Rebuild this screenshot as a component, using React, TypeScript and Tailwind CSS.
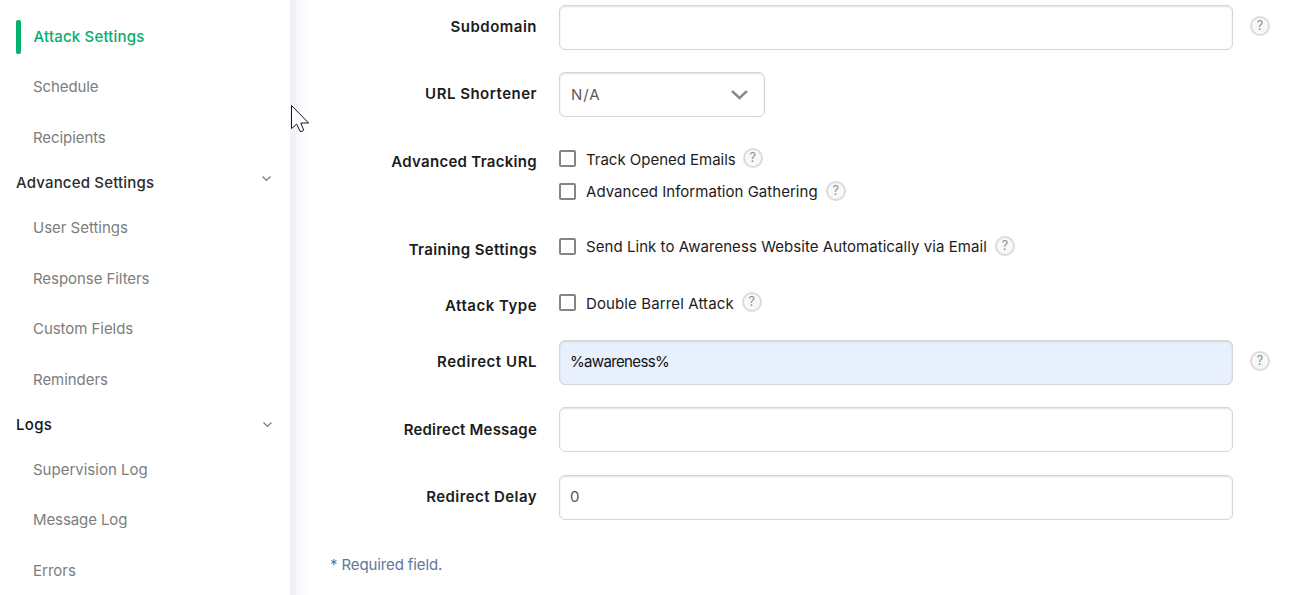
import type { ReactNode } from 'react';

type NavEntry = { text: string; kind: 'item' | 'header' | 'active'; tracking?: string; className?: string; chevron?: string };

const NAV: NavEntry[] = [
  { text: 'Attack Settings', kind: 'active', tracking: 'tracking-[0.18px]' },
  { text: 'Schedule', kind: 'item', tracking: 'tracking-[-0.1px]' },
  { text: 'Recipients', kind: 'item', tracking: 'tracking-[-0.08px]' },
  { text: 'Advanced Settings', kind: 'header', tracking: 'tracking-[0.18px]', className: 'h-10 text-[#2b2b2b]', chevron: 'mb-[9px] mr-px' },
  { text: 'User Settings', kind: 'item', tracking: 'tracking-[-0.02px]' },
  { text: 'Response Filters', kind: 'item', tracking: 'tracking-[-0.06px]' },
  { text: 'Custom Fields', kind: 'item', tracking: 'tracking-[-0.05px]' },
  { text: 'Reminders', kind: 'item', tracking: 'tracking-[-0.05px]' },
  { text: 'Logs', kind: 'header', tracking: 'tracking-[0.3px]', className: 'h-[39.5px] text-[#151515]', chevron: '' },
  { text: 'Supervision Log', kind: 'item' },
  { text: 'Message Log', kind: 'item', tracking: 'tracking-[-0.1px]' },
  { text: 'Errors', kind: 'item' },
];

function NavRow({ entry }: { entry: NavEntry }) {
  const tracking = entry.tracking ?? '';
  if (entry.kind === 'header') {
    return (
      <div className={`flex shrink-0 items-center justify-between pl-4 pr-[18px] ${entry.className}`}>
        <span className={`font-medium ${tracking}`}>{entry.text}</span>
        <svg className={`h-[5px] w-[9px] ${entry.chevron}`} viewBox="0 0 9 5" fill="none" stroke="#777" strokeWidth="1.2">
          <path d="M.5 .5 4.5 4.4 8.5 .5" />
        </svg>
      </div>
    );
  }
  if (entry.kind === 'active') {
    return (
      <div className="flex h-[50.5px] shrink-0 items-center pl-4">
        <span className="h-[34px] w-[5px] rounded-[2px] bg-[#06b16b]" />
        <span className={`ml-[12.6px] font-medium text-[#06ad68] ${tracking}`}>{entry.text}</span>
      </div>
    );
  }
  return (
    <div className="flex h-[50.5px] shrink-0 items-center pl-[33px]">
      <span className={`text-[#7d7d7d] ${tracking}`}>{entry.text}</span>
    </div>
  );
}

function Help({ className = '' }: { className?: string }) {
  return (
    <span className={`flex h-5 w-5 shrink-0 items-center justify-center rounded-full border-2 border-[#dcdcdc] bg-[#f8f8f8] pt-px text-[12.5px] leading-none text-[#8c8c8c] ${className}`}>
      ?
    </span>
  );
}

function Row({ label, tracking, height, children }: { label: string; tracking: string; height: string; children: ReactNode }) {
  return (
    <div className={`flex shrink-0 items-start ${height}`}>
      <div className={`flex h-[43px] w-[227px] shrink-0 items-center justify-end font-semibold text-[#1c1c1c] ${tracking}`}>{label}</div>
      <div className="ml-[22px] flex flex-col">{children}</div>
    </div>
  );
}

function Field({ value = '', className = 'bg-white', help = false }: { value?: string; className?: string; help?: boolean }) {
  return (
    <div className="flex items-center">
      <div className={`flex h-[45px] w-[674px] items-center rounded-md border border-[#d5d5d5] px-[10px] pb-[2px] shadow-[inset_0_1px_2px_rgba(0,0,0,0.12)] ${className}`}>
        {value}
      </div>
      {help && <Help className="mb-[3px] ml-[17px]" />}
    </div>
  );
}

function Check({ text, tracking = '', helpClass, textClass = '', boxClass = '' }: { text: string; tracking?: string; helpClass: string; textClass?: string; boxClass?: string }) {
  return (
    <div className="flex h-8 items-center">
      <span className={`h-[17px] w-[17px] rounded-[2px] border-2 border-[#858585] bg-white ${boxClass}`} />
      <span className={`ml-[10px] whitespace-nowrap text-[#1c1c1c] ${textClass} ${tracking}`}>{text}</span>
      <Help className={helpClass} />
    </div>
  );
}

export default function App() {
  return (
    <div className="relative flex h-[595px] w-[1289px] overflow-hidden bg-white font-['Inter',sans-serif] text-[15px] leading-5">
      <nav className="flex w-[290px] shrink-0 flex-col pt-[11.5px]">
        {NAV.map((entry) => (
          <NavRow key={entry.text} entry={entry} />
        ))}
      </nav>
      <div className="w-5 shrink-0 bg-[linear-gradient(to_right,#f0f1f8_0,#f0f1f8_4px,#f8f8fc_8px,#fcfcfe_13px,#fff_20px)]" />
      <main className="flex flex-1 flex-col pt-[5px]">
        <Row label="Subdomain" tracking="tracking-[0.5px]" height="h-[67px]">
          <Field help />
        </Row>
        <Row label="URL Shortener" tracking="tracking-[0.5px]" height="h-[68px]">
          <div className="flex h-[45px] w-[206px] items-center justify-between rounded-md border border-[#d5d5d5] bg-white pl-[11px] pr-4 text-[#5a5a5a] shadow-[inset_0_1px_2px_rgba(0,0,0,0.12)]">
            <span className="tracking-[1px]">N/A</span>
            <svg className="h-[10px] w-[17px]" viewBox="0 0 17 10" fill="none" stroke="#8a8a8a" strokeWidth="2.4">
              <path d="M1 1 8.5 8 16 1" />
            </svg>
          </div>
        </Row>
        <Row label="Advanced Tracking" tracking="tracking-[0.3px]" height="h-[88px]">
          <div className="pt-[2px]">
            <Check text="Track Opened Emails" tracking="tracking-[-0.02px]" textClass="pt-1" boxClass="mt-px" helpClass="ml-[7px]" />
          </div>
          <Check text="Advanced Information Gathering" tracking="tracking-[0.03px]" textClass="pt-1" boxClass="mt-[2px]" helpClass="ml-2 mt-px" />
        </Row>
        <Row label="Training Settings" tracking="tracking-[0.35px]" height="h-[56px]">
          <div className="pt-[2px]">
            <Check text="Send Link to Awareness Website Automatically via Email" tracking="tracking-[0.055px]" textClass="pt-[2px]" helpClass="ml-2" />
          </div>
        </Row>
        <Row label="Attack Type" tracking="tracking-[0.5px]" height="h-[56px]">
          <div className="pt-[2px]">
            <Check text="Double Barrel Attack" tracking="tracking-[0.12px]" textClass="pt-1" boxClass="mt-px" helpClass="ml-2" />
          </div>
        </Row>
        <Row label="Redirect URL" tracking="tracking-[0.55px]" height="h-[67px]">
          <Field value="%awareness%" className="bg-[#e8effd] tracking-[-0.65px] text-[#111]" help />
        </Row>
        <Row label="Redirect Message" tracking="tracking-[0.2px] pt-[2px]" height="h-[68px]">
          <Field />
        </Row>
        <Row label="Redirect Delay" tracking="tracking-[0.42px]" height="h-[80px]">
          <Field value="0" className="bg-white text-[#555]" />
        </Row>
        <p className="pl-5 tracking-[-0.12px] text-[#5d779f]">* Required field.</p>
      </main>
      <svg className="absolute left-[291px] top-[104px] h-[29px] w-[19px]" viewBox="0 0 19 29" fill="#fff" stroke="#15151f" strokeWidth="1">
        <path d="M.5 1.5v23l5.2-4.3 3.3 7c1.2.6 3.2 0 3.6-1.2L9.8 19h7.8Z" />
      </svg>
    </div>
  );
}
